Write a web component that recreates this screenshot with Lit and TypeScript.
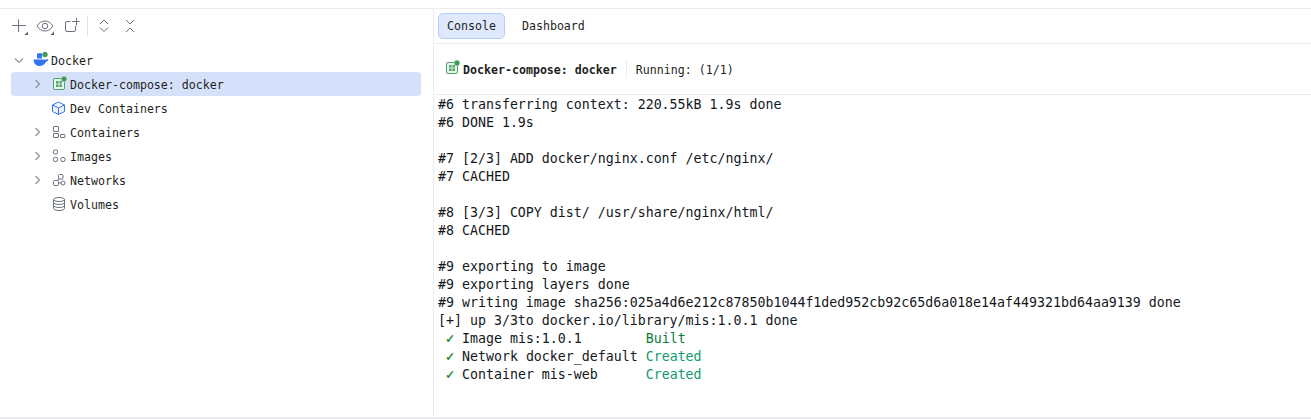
import { LitElement, html, css } from "lit";
import { customElement } from "lit/decorators.js";

const G = "#6c707e";

const composeIcon = () => html`<svg class="ic" viewBox="0 0 16 16" width="16" height="16" fill="none">
  <rect x="2.500" y="2.500" width="11" height="11" rx="1.500" fill="#e8f5ec" stroke="#4e9f6a"/>
  <rect x="5" y="5" width="2.600" height="2.600" fill="#55a76f"/><rect x="8.400" y="5" width="2.600" height="2.600" fill="#55a76f"/>
  <rect x="5" y="8.400" width="2.600" height="2.600" fill="#55a76f"/><rect x="8.400" y="8.400" width="2.600" height="2.600" fill="#55a76f"/>
  <circle cx="13" cy="3" r="3" fill="#3f9c5a" stroke="#fff" stroke-width=".5"/>
</svg>`;

const chevronRight = html`<svg class="chev" viewBox="0 0 16 16" width="16" height="16" fill="none"><path d="M5.500 4 9.500 8l-4 4" stroke="#8c8f96" stroke-width="1.100"/></svg>`;
const chevronDown = html`<svg class="chev" viewBox="0 0 16 16" width="16" height="16" fill="none"><path d="M4 6.500 8 10.500l4-4" stroke="#8c8f96" stroke-width="1.100"/></svg>`;
const noChev = html`<span class="chev"></span>`;

const dockerIcon = html`<svg class="ic" viewBox="0 0 16 16" width="16" height="16">
  <path d="M.5 7.500h10.800c.4.300 1 .4 1.500.2.600-.4 1.400-.6 2.700-.2-.3 1-1.100 1.700-2.100 1.900C11.400 12.400 9.300 14 6.500 14 3 14 .8 11.700.5 7.500Z" fill="#3574f0"/>
  <rect x="4" y="1.200" width="5" height="5.300" rx=".5" fill="#3574f0"/>
  <circle cx="12" cy="2.500" r="2.700" fill="#3f9c5a"/>
</svg>`;
const cubeIcon = html`<svg class="ic" viewBox="0 0 16 16" width="16" height="16" fill="none" stroke="#3574f0">
  <path d="M7.500 2 13.500 5v6.500l-6 3-6-3V5Z" fill="#f0f5ff"/><path d="M1.500 5 7.500 8l6-3M7.500 8v6.500"/>
</svg>`;
const containersIcon = html`<svg class="ic" viewBox="0 0 16 16" width="16" height="16" fill="none" stroke="${G}">
  <rect x="2.500" y="2.500" width="5" height="5" rx=".5"/><rect x="2.500" y="9.500" width="5" height="4" rx=".5"/><rect x="9.500" y="10.500" width="4.500" height="3" rx=".5"/>
</svg>`;
const imagesIcon = html`<svg class="ic" viewBox="0 0 16 16" width="16" height="16" fill="none" stroke="${G}">
  <circle cx="4.500" cy="4" r="2.200"/><circle cx="4.500" cy="11.500" r="2.200"/><circle cx="12" cy="11.500" r="2.200"/>
</svg>`;
const networksIcon = html`<svg class="ic" viewBox="0 0 16 16" width="16" height="16" fill="none" stroke="${G}">
  <rect x="7.500" y="2.500" width="4.500" height="4.500" rx="1"/><rect x="2.500" y="8.500" width="5" height="5" rx="1"/><circle cx="12" cy="11" r="2"/>
  <path d="M8.500 7 6 8.500M7.500 11H10"/>
</svg>`;
const volumesIcon = html`<svg class="ic" viewBox="0 0 16 16" width="16" height="16" fill="none" stroke="${G}">
  <ellipse cx="8" cy="3.500" rx="5.500" ry="2"/><path d="M2.500 3.500v9c0 1.100 2.500 2 5.500 2s5.500-.9 5.500-2v-9M2.500 6.500c0 1.100 2.500 2 5.500 2s5.500-.9 5.500-2M2.500 9.500c0 1.100 2.500 2 5.500 2s5.500-.9 5.500-2"/>
</svg>`;

const consoleLines: string[] = [
  "#6 transferring context: 220.55kB 1.9s done",
  "#6 DONE 1.9s",
  "",
  "#7 [2/3] ADD docker/nginx.conf /etc/nginx/",
  "#7 CACHED",
  "",
  "#8 [3/3] COPY dist/ /usr/share/nginx/html/",
  "#8 CACHED",
  "",
  "#9 exporting to image",
  "#9 exporting layers done",
  "#9 writing image sha256:025a4d6e212c87850b1044f1ded952cb92c65d6a018e14af449321bd64aa9139 done",
  "[+] up 3/3to docker.io/library/mis:1.0.1 done",
];

@customElement("app-root")
export class AppRoot extends LitElement {
  static styles = css`
    :host { display: block; width: 1311px; height: 419px; background: #fff; overflow: hidden;
      font-family: "DejaVu Sans Mono", "Liberation Mono", monospace; color: #1e1f22; }
    .frame { display: grid; grid-template-columns: 434px 1fr; margin-top: 8px; height: 408px;
      border-top: 1px solid #ebecf0; border-bottom: 2px solid #ebecf0; }
    .left { border-right: 1px solid #ebecf0; padding: 7px 12px 0 11px; display: flex; flex-direction: column; min-width: 0; }
    .tools { display: flex; align-items: center; height: 20px; }
    .tools svg { display: block; flex: none; }
    .sep { width: 1px; height: 20px; background: #dfe1e5; margin-left: 4px; }
    .expand { margin-left: 8px; }
    .collapse { margin-left: 10px; }
    .tree { margin-top: 12px; font-size: 11.62px; }
    .row { display: flex; align-items: center; height: 24px; border-radius: 4px; white-space: pre; }
    .row span.label { padding-top: 2px; }
    .row.sel { background: #d5e1fb; }
    .chev { width: 16px; height: 16px; flex: none; display: block; }
    .ic { flex: none; display: block; }
    .d0 .chev { margin-right: 6px; }
    .d0 .ic { margin-right: 2px; }
    .d1 { padding-left: 19px; }
    .d1 .chev { margin-right: 5px; }
    .d1 .ic { margin-right: 3px; }
    .right { display: flex; flex-direction: column; min-width: 0; }
    .tabs { display: flex; align-items: center; height: 34px; padding-left: 4px; gap: 8px; border-bottom: 1px solid #ebecf0; font-size: 11.62px; }
    .tab { height: 24px; padding: 0 8px; display: flex; align-items: center; border: 1px solid transparent; border-radius: 5px; }
    .tab.active { background: #dfe9fd; border-color: #b4cdfa; }
    .head { display: flex; align-items: center; height: 51px; padding-left: 10px; border-bottom: 1px solid #ebecf0; font-size: 11.62px; box-sizing: border-box; }
    .head .ic { margin: 0 3px 2px 0; }
    .head b { font-weight: 700; padding-top: 2px; }
    .head .status { padding-top: 2px; }
    .head .div { width: 1px; height: 17px; background: #ebecf0; margin: 0 9px; }
    .console { font-size: 13.28px; line-height: 18px; color: #14171c; padding: 1px 0 0 4px; }
    .ln { height: 18px; display: block; white-space: pre; }
    .ck { color: #1a7f2e; font-weight: 700; -webkit-text-stroke: .4px #1a7f2e; }
    .built { color: #107a3d; }
    .created { color: #0e9a6c; }
  `;

  private row(cls: string, chev: unknown, icon: unknown, label: string, sel = false) {
    return html`<div class="row ${cls} ${sel ? "sel" : ""}">${chev}${icon}<span class="label">${label}</span></div>`;
  }

  render() {
    return html`<div class="frame">
      <div class="left">
        <div class="tools">
          <svg width="20" height="20" viewBox="0 0 20 20" fill="none" stroke="${G}"><path d="M7.500 3.500V16M1 9.500h14"/><path d="M17 15.500V19h-3.500Z" fill="#5a5d66" stroke="none"/></svg>
          <svg width="26" height="20" viewBox="0 0 26 20" fill="none" stroke="${G}"><path d="M6 10c2-3.300 4.800-5 8-5s6 1.700 8 5c-2 3.300-4.800 5-8 5s-6-1.700-8-5Z"/><circle cx="14" cy="10" r="2.800"/><path d="M23 15.500V19h-3.500Z" fill="#5a5d66" stroke="none"/></svg>
          <svg width="26" height="20" viewBox="0 0 26 20" fill="none" stroke="${G}"><path d="M13.500 5.500H10A1.500 1.500 0 0 0 8.500 7v7a1.500 1.500 0 0 0 1.500 1.500h7a1.500 1.500 0 0 0 1.500-1.500v-4M19.500 2v7.500M15 5.500h7.500"/></svg>
          <span class="sep"></span>
          <svg class="expand" width="16" height="20" viewBox="0 0 16 20" fill="none" stroke="${G}"><path d="M4 8l4-4 4 4M4 11.500l4 4 4-4"/></svg>
          <svg class="collapse" width="16" height="20" viewBox="0 0 16 20" fill="none" stroke="${G}"><path d="M4 4l4 4 4-4M4 16l4-4 4 4"/></svg>
        </div>
        <div class="tree">
          ${this.row("d0", chevronDown, dockerIcon, "Docker")}
          ${this.row("d1", chevronRight, composeIcon(), "Docker-compose: docker", true)}
          ${this.row("d1", noChev, cubeIcon, "Dev Containers")}
          ${this.row("d1", chevronRight, containersIcon, "Containers")}
          ${this.row("d1", chevronRight, imagesIcon, "Images")}
          ${this.row("d1", chevronRight, networksIcon, "Networks")}
          ${this.row("d1", noChev, volumesIcon, "Volumes")}
        </div>
      </div>
      <div class="right">
        <div class="tabs">
          <div class="tab active">Console</div>
          <div class="tab">Dashboard</div>
        </div>
        <div class="head">
          ${composeIcon()}
          <b>Docker-compose: docker</b>
          <span class="div"></span>
          <span class="status">Running: (1/1)</span>
        </div>
        <div class="console">
          ${consoleLines.map((l) => html`<span class="ln">${l}</span>`)}
          <span class="ln"> <span class="ck">✓</span> Image mis:1.0.1        <span class="built">Built</span></span>
          <span class="ln"> <span class="ck">✓</span> Network docker_default <span class="created">Created</span></span>
          <span class="ln"> <span class="ck">✓</span> Container mis-web      <span class="created">Created</span></span>
        </div>
      </div>
    </div>`;
  }
}
